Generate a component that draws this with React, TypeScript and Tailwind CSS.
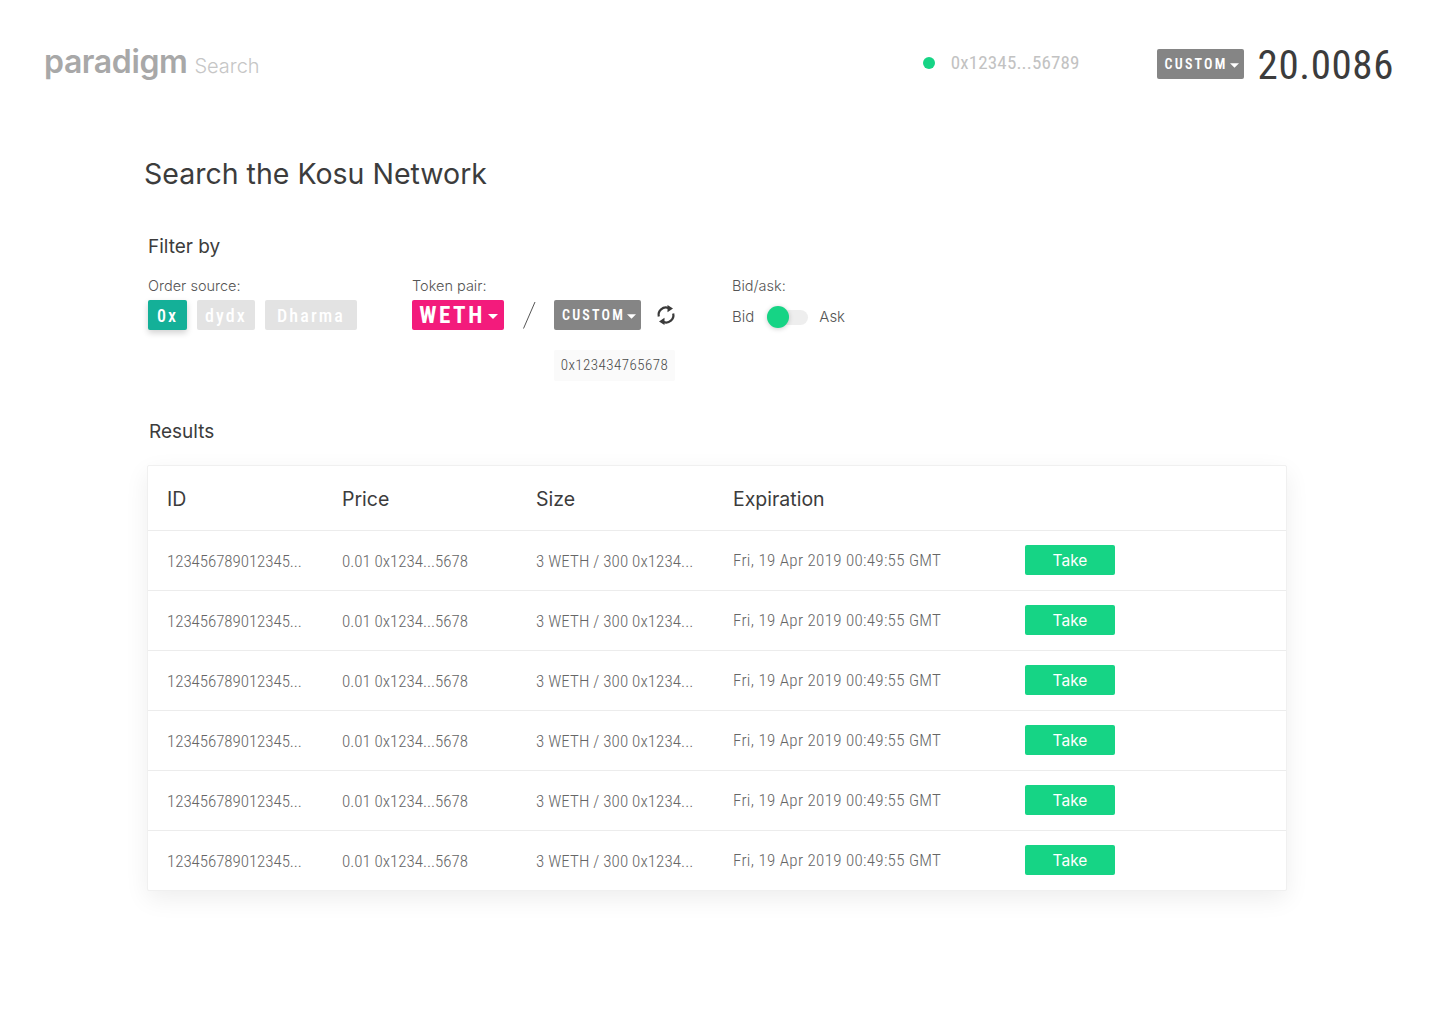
import React from "react";

const din = "font-['Roboto','Liberation_Sans',sans-serif] font-stretch-[80%]";
const geo = "font-['Inter','Lato',sans-serif]";

const rows = [1, 2, 3, 4, 5, 6];

function Caret({ className }: { className: string }) {
  return (
    <svg viewBox="0 0 10 5" className={className} fill="currentColor">
      <path d="M0 0h10L5 5z" />
    </svg>
  );
}

function SyncIcon() {
  return (
    <svg viewBox="0 0 20 20" className="ml-[15px] h-[20px] w-[20px] text-[#3a3a3a]">
      <path d="M2.8 11.5A7.3 7.3 0 0 1 12.5 3M17.2 8.5A7.3 7.3 0 0 1 7.5 17" fill="none" stroke="currentColor" strokeWidth="2.2" />
      <path d="M11.5 0 17 3.6 11.5 7.2zM8.5 20 3 16.4 8.5 12.8z" fill="currentColor" />
    </svg>
  );
}

function CustomButton() {
  return (
    <button className={`${din} flex h-[30px] w-[87px] items-center justify-center gap-[2px] rounded-[2px] bg-[#858585] pl-[3px] text-[14px] font-semibold tracking-[2.2px] text-white`}>
      CUSTOM
      <Caret className="mt-[2px] h-[5px] w-[9px]" />
    </button>
  );
}

function SourceButton({ label, active, width }: { label: string; active?: boolean; width: string }) {
  return (
    <button
      className={`${din} h-[30px] rounded-[2px] text-[18px] font-medium tracking-[2.1px] text-white ${width} ${
        active ? "bg-[#14b098] shadow-[0_3px_6px_rgba(0,0,0,0.18)]" : "bg-[#e3e3e3]"
      }`}
    >
      {label}
    </button>
  );
}

export default function App() {
  return (
    <div className={`${geo} h-[1019px] w-[1435px] bg-white text-[#3c3c3c]`}>
      {/* Header */}
      <header className="flex h-[156px] items-start pl-[44px] pr-[41px] pt-[43px]">
        <div className="-mt-[1px] flex items-baseline">
          <span className="text-[32px] leading-[40px] font-semibold tracking-[-0.4px] text-[#a8a8a8]">paradigm</span>
          <span className="ml-[7px] text-[20px] font-light text-[#c6c6c6]">Search</span>
        </div>
        <div className="ml-auto flex items-center pt-[6px]">
          <span className="h-[12px] w-[12px] rounded-full bg-[#16d485]" />
          <span className={`${din} ml-[16px] text-[19px] tracking-[0.15px] text-[#c2c2c2]`}>0x12345...56789</span>
        </div>
        <div className="ml-[77px] pt-[6px]">
          <CustomButton />
        </div>
        <div className={`${din} ml-[14px] text-[41px] leading-[44px] tracking-[0.6px] text-[#3c3c3c]`}>20.0086</div>
      </header>

      <main className="pl-[148px]">
        <h1 className="-ml-[4px] text-[28.5px] leading-[36px] font-normal text-[#3c3c3c]">Search the Kosu Network</h1>

        <h2 className="mt-[41px] text-[19px] leading-[28px]">Filter by</h2>

        {/* Filters */}
        <div className="mt-[14px] flex h-[127px] items-start text-[14.5px] font-light text-[#555]">
          <div className="w-[264px]">
            <div className="leading-[22px]">Order source:</div>
            <div className="mt-[3px] flex gap-[10px]">
              <SourceButton label="0x" active width="w-[39px]" />
              <SourceButton label="dydx" width="w-[58px]" />
              <SourceButton label="Dharma" width="w-[92px]" />
            </div>
          </div>

          <div className="w-[320px]">
            <div className="leading-[22px]">Token pair:</div>
            <div className="mt-[3px] flex items-center">
              <button className={`${din} flex h-[30px] w-[92px] items-center justify-center gap-[3px] rounded-[2px] bg-[#f31b7c] pl-px pt-[3px] text-[23px] font-bold tracking-[2.6px] text-white`}>
                WETH
                <Caret className="h-[5px] w-[10px]" />
              </button>
              <svg viewBox="0 0 14 28" className="ml-[18px] h-[28px] w-[14px] text-[#555]" fill="none" stroke="currentColor">
                <path d="M13 1 1.5 27.5" />
              </svg>
              <div className="ml-[18px]">
                <CustomButton />
              </div>
              <SyncIcon />
            </div>
            <div className={`${din} ml-[142px] mt-[20px] flex h-[31px] w-[121px] items-center justify-center rounded-[2px] bg-[#fafafa] text-[15px] font-light tracking-[0.45px] text-[#4a4a4a]`}>
              0x123434765678
            </div>
          </div>

          <div>
            <div className="leading-[22px]">Bid/ask:</div>
            <div className="mt-[9px] flex items-center text-[15px]">
              <span>Bid</span>
              <span className="relative ml-[13px] h-[15px] w-[41px] rounded-full bg-[#eeeeee]">
                <span className="absolute -top-[4px] left-0 h-[22px] w-[22px] rounded-full bg-[#16d485] shadow-[0_1px_5px_rgba(0,0,0,0.2)]" />
              </span>
              <span className="ml-[11px]">Ask</span>
            </div>
          </div>
        </div>

        <h2 className="ml-[1px] mt-[16px] text-[19px] leading-[28px]">Results</h2>

        {/* Results table */}
        <div className="-ml-px mt-[19px] w-[1140px] rounded-[2px] border border-[#f0f0f0] bg-white shadow-[0_8px_24px_rgba(0,0,0,0.07)]">
          <div className="grid h-[64px] grid-cols-[175px_194px_197px_292px_1fr] items-center pl-[19px] pt-[4px] text-[19.5px] font-normal text-[#3c3c3c]">
            <span>ID</span>
            <span>Price</span>
            <span>Size</span>
            <span>Expiration</span>
            <span />
          </div>
          {rows.map((row) => (
            <div
              key={row}
              className={`${din} grid h-[60px] grid-cols-[175px_194px_197px_292px_1fr] items-center border-t border-[#ececec] pl-[19px] pt-[2px] text-[17px] font-light text-[#666]`}
            >
              <span className="tracking-[-0.08px]">123456789012345...</span>
              <span className="tracking-[-0.03px]">0.01 0x1234...5678</span>
              <span className="tracking-[0.05px]">3 WETH / 300 0x1234...</span>
              <span className="-mt-[2px] tracking-[0.3px]">Fri, 19 Apr 2019 00:49:55 GMT</span>
              <button className={`${geo} -mt-[4px] h-[30px] w-[90px] rounded-[2px] bg-[#16d485] pt-[2px] text-[15.5px] font-normal text-white`}>Take</button>
            </div>
          ))}
        </div>
      </main>
    </div>
  );
}
